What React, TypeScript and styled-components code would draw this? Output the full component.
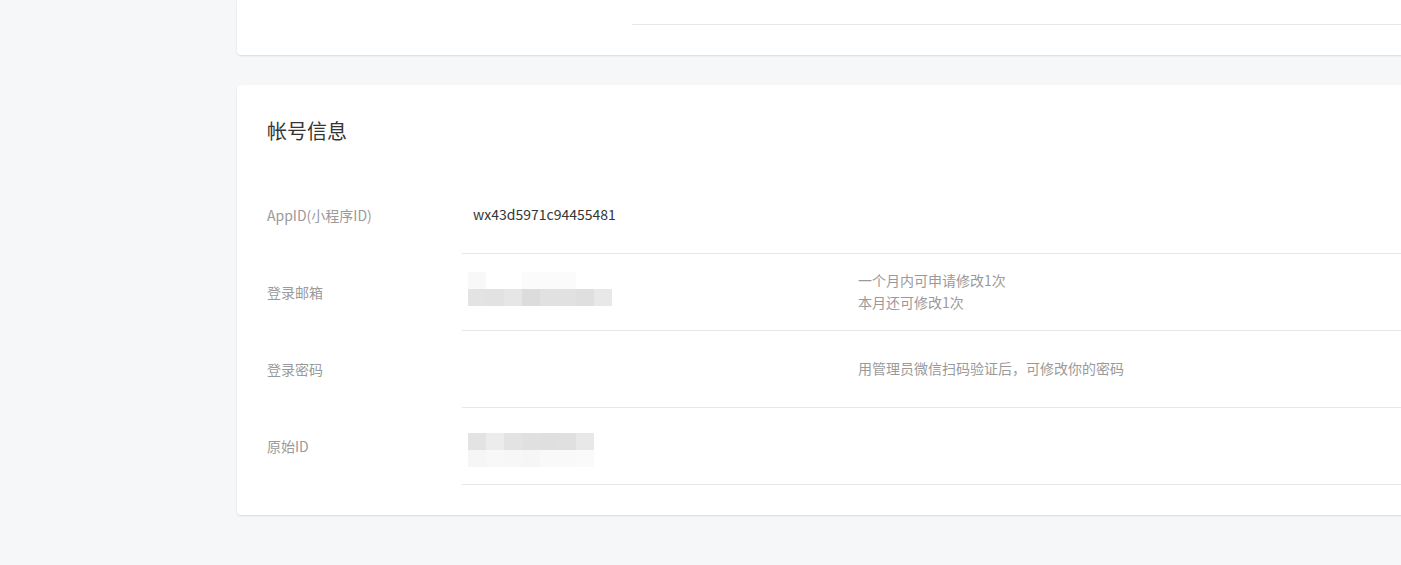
import React from "react";
import styled, { createGlobalStyle } from "styled-components";

const Global = createGlobalStyle`
  html, body {
    margin: 0;
    padding: 0;
    background: #f6f7f9;
    overflow: hidden;
  }
  body {
    font-family: "Noto Sans CJK SC", "Noto Sans", sans-serif;
    -webkit-font-smoothing: antialiased;
  }
`;

const Page = styled.div`
  width: 1401px;
  height: 565px;
  overflow: hidden;
  padding-left: 237px;
  box-sizing: border-box;
  display: flex;
  flex-direction: column;
  gap: 30px;
`;

const Card = styled.section<{ $h?: number }>`
  width: 1240px;
  flex: none;
  background: #fff;
  border-radius: 0 0 4px 4px;
  box-shadow: 0 1px 2px rgba(0, 0, 0, 0.12);
  box-sizing: border-box;
  ${(p) => (p.$h ? `height: ${p.$h}px;` : "")}
`;

const AccountCard = styled(Card)`
  border-radius: 4px;
  padding: 31px 0 30px 30px;
`;

const TopLine = styled.div`
  margin-left: 395px;
  height: 24px;
  border-bottom: 1px solid #e7e7eb;
`;

const Title = styled.h2`
  margin: 0 0 31px;
  font-size: 20px;
  line-height: 30px;
  font-weight: 400;
  color: #353535;
`;

const Row = styled.div`
  display: flex;
  height: 77px;
`;

const Label = styled.div`
  width: 195px;
  flex: none;
  display: flex;
  align-items: center;
  padding-bottom: 2px;
  box-sizing: border-box;
  font-size: 14px;
  color: #9a9a9a;
`;

const Body = styled.div`
  flex: 1;
  display: flex;
  align-items: center;
  padding-bottom: 2px;
  border-bottom: 1px solid #e7e7eb;
`;

const Value = styled.div`
  width: 385px;
  padding-left: 11px;
  flex: none;
  font-size: 14px;
  color: #353535;
`;

const Tips = styled.div`
  font-size: 14px;
  line-height: 22px;
  color: #9a9a9a;
`;

const Mosaic = styled.div<{ $cols: number; $shift: number }>`
  display: grid;
  grid-template-columns: repeat(${(p) => p.$cols}, 18px);
  grid-auto-rows: 17px;
  margin-left: -5px;
  margin-top: ${(p) => p.$shift}px;
`;

const Cell = styled.div<{ $c: string }>`
  background: ${(p) => p.$c};
`;

const emailCells = [
  "#f8f8f8", "#fff", "#fff", "#fbfbfb", "#fbfbfb", "#fbfbfb", "#fff", "#fff",
  "#e3e3e3", "#e2e2e2", "#e6e6e6", "#dcdcdc", "#e1e1e1", "#e1e1e1", "#dfdfdf", "#e8e8e8",
];

const idCells = [
  "#e3e3e3", "#ececec", "#e3e3e3", "#e0e0e0", "#dfdfdf", "#e0e0e0", "#e8e8e8",
  "#f6f6f6", "#f8f8f8", "#f7f7f7", "#f6f6f6", "#f9f9f9", "#f9f9f9", "#fafafa",
];

export default function App() {
  return (
    <>
      <Global />
      <Page>
        <Card $h={55}>
          <TopLine />
        </Card>
        <AccountCard>
          <Title>帐号信息</Title>
          <Row>
            <Label>AppID(小程序ID)</Label>
            <Body>
              <Value>wx43d5971c94455481</Value>
            </Body>
          </Row>
          <Row>
            <Label>登录邮箱</Label>
            <Body>
              <Value>
                <Mosaic $cols={8} $shift={-4}>
                  {emailCells.map((c, i) => (
                    <Cell key={i} $c={c} />
                  ))}
                </Mosaic>
              </Value>
              <Tips>
                一个月内可申请修改1次
                <br />
                本月还可修改1次
              </Tips>
            </Body>
          </Row>
          <Row>
            <Label>登录密码</Label>
            <Body>
              <Value />
              <Tips>用管理员微信扫码验证后，可修改你的密码</Tips>
            </Body>
          </Row>
          <Row>
            <Label>原始ID</Label>
            <Body>
              <Value>
                <Mosaic $cols={7} $shift={10}>
                  {idCells.map((c, i) => (
                    <Cell key={i} $c={c} />
                  ))}
                </Mosaic>
              </Value>
            </Body>
          </Row>
        </AccountCard>
      </Page>
    </>
  );
}
